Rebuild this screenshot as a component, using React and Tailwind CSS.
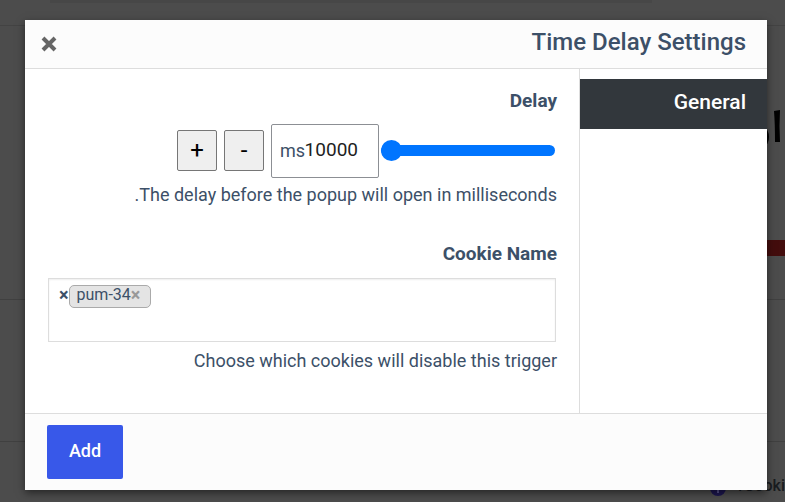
import { useState } from "react";

export default function App() {
  return (
    <div className="relative flex min-h-screen overflow-hidden bg-[#4c4c4c] pt-5 pr-[18px] pb-3 pl-[25px] font-[Roboto,sans-serif] text-[#3c5068]">
      <PageBehind />
      <TriggerModal />
    </div>
  );
}

// Dimmed editor page that shows around the modal
function PageBehind() {
  return (
    <div className="absolute inset-0 overflow-hidden" aria-hidden="true">
      <div className="absolute inset-x-0 top-[25px] h-px bg-[#434343]" />
      <div className="absolute inset-x-0 top-[299px] h-px bg-[#404040]" />
      <div className="absolute inset-x-0 top-[441px] h-px bg-[#404040]" />
      <div className="absolute top-0 left-[50px] right-[133px] h-[3px] bg-[#474747]" />
      <div className="absolute top-[240px] right-0 h-4 w-10 bg-[#430d0d]" />
      <svg className="absolute top-[108px] right-0 h-10 w-6" viewBox="0 0 24 40">
        <path d="M13 3 L19 2 Q18 18 19 34 L14 34 Q14 16 13 3Z" fill="#020202" />
        <ellipse cx="3" cy="29" rx="5" ry="9" fill="#020202" />
      </svg>
      <svg className="absolute top-[480px] right-[59px] h-4 w-4" viewBox="0 0 16 16">
        <circle cx="8" cy="8" r="8" fill="#1c1650" />
        <path d="M8 4v1M8 7v6" stroke="#55508a" strokeWidth="2" />
      </svg>
      <div className="absolute top-[474px] right-0 text-base font-medium leading-6 text-[#191c20]">1Cooki</div>
    </div>
  );
}

function TriggerModal() {
  return (
    <div dir="rtl" role="dialog" aria-labelledby="modal-title" className="relative flex flex-1 flex-col bg-white shadow-[0_3px_8px_rgba(0,0,0,0.5)]">
      <header className="flex h-[49px] items-center justify-between border-b border-[#dddddd] bg-[#fcfcfc] pr-[21px] pl-4">
        <h2 id="modal-title" className="pb-1 text-2xl font-medium">Time Delay Settings</h2>
        <button type="button" aria-label="Close" className="flex h-4 w-4 items-center justify-center">
          <svg className="h-4 w-4" viewBox="0 0 16 16">
            <path d="M2 2 L14 14 M14 2 L2 14" stroke="#666666" strokeWidth="4" />
          </svg>
        </button>
      </header>

      <div className="flex flex-1">
        <nav className="w-[188px] border-l border-[#dddddd] pt-[10px]">
          <a href="#general" className="block h-[50px] bg-[#32373c] pr-[21px] text-[21px] font-medium leading-[46px] text-white">
            General
          </a>
        </nav>
        <Fields />
      </div>

      <footer className="flex h-[77px] items-start justify-end border-t border-[#dddddd] bg-[#fcfcfc] pt-[11px] pl-[22px]">
        <button type="button" className="h-[54px] w-[76px] rounded-xs bg-[#3858e9] pb-0.5 text-lg font-medium text-white">Add</button>
      </footer>
    </div>
  );
}

function Fields() {
  const [delay, setDelay] = useState(10000);
  const step = (n) => setDelay((d) => Math.min(10000, Math.max(0, d + n)));

  return (
    <div className="min-w-0 flex-1 pt-5 pr-[22px] pl-[23px]">
      <div>
        <label htmlFor="delay" className="block text-[19px] font-bold leading-6">Delay</label>
        <div className="mt-[11px] flex items-center">
          <input
            type="range"
            aria-label="Delay slider"
            min="0"
            max="10000"
            step="100"
            value={delay}
            onChange={(e) => setDelay(Number(e.target.value))}
            className="mr-0.5 mb-0.5 h-[21px] w-[174px] appearance-none bg-transparent [&::-webkit-slider-runnable-track]:h-[11px] [&::-webkit-slider-runnable-track]:rounded-full [&::-webkit-slider-runnable-track]:bg-[#0075ff] [&::-webkit-slider-thumb]:-mt-[5px] [&::-webkit-slider-thumb]:h-[21px] [&::-webkit-slider-thumb]:w-[21px] [&::-webkit-slider-thumb]:appearance-none [&::-webkit-slider-thumb]:rounded-full [&::-webkit-slider-thumb]:bg-[#0075ff]"
          />
          <div className="mr-0.5 flex h-[54px] w-[108px] items-center rounded-xs border border-[#8c8f94] pr-5 pl-2">
            <input
              id="delay"
              type="text"
              value={delay}
              onChange={(e) => setDelay(Number(e.target.value) || 0)}
              className="w-0 flex-1 bg-transparent pb-0.5 text-[19px] text-[#1e1e1e] outline-none"
            />
            <span className="text-lg">ms</span>
          </div>
          <StepButton label="-" name="Decrease" onClick={() => step(-100)} />
          <StepButton label="+" name="Increase" onClick={() => step(100)} />
        </div>
        <p className="mt-[5px] text-lg leading-6">The delay before the popup will open in milliseconds.</p>
      </div>

      <div className="mt-[35px]">
        <label htmlFor="cookie-name" className="block text-[19px] font-bold leading-6">Cookie Name</label>
        <div className="mt-3 mr-px flex h-16 items-start border border-[#dddddd] pt-[6px] pl-2.5 shadow-[inset_0_1px_2px_rgba(0,0,0,0.07)]">
          <input id="cookie-name" type="text" className="min-w-0 flex-1 bg-transparent outline-none" />
          <span className="flex h-[23px] items-center rounded-[5px] border border-[#aaaaaa] bg-[#e4e4e4] pr-[10px] pl-[7px] text-base leading-5">
            <button type="button" aria-label="Remove pum-34" className="pb-[3px] text-lg font-bold leading-5 text-[#999999]">×</button>
            <span className="pb-[3px]">pum-34</span>
          </span>
          <button type="button" aria-label="Clear all" className="text-lg font-bold leading-5">×</button>
        </div>
        <p className="mt-[7px] text-lg leading-6">Choose which cookies will disable this trigger</p>
      </div>
    </div>
  );
}

function StepButton({ label, name, onClick }) {
  return (
    <button
      type="button"
      aria-label={name}
      onClick={onClick}
      className="mr-[7px] mb-0.5 h-[41px] w-10 rounded-xs border border-[#767676] bg-[#efefef] text-2xl leading-6 text-black"
    >
      {label}
    </button>
  );
}
